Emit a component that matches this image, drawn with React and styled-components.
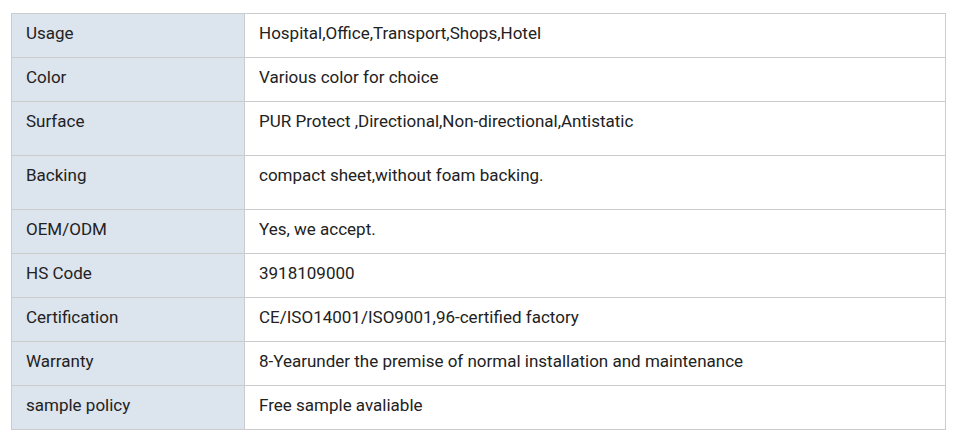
import React from "react";
import styled, { createGlobalStyle } from "styled-components";

const GlobalStyle = createGlobalStyle`
  html, body {
    margin: 0;
    padding: 0;
    background: #fff;
  }
`;

const Wrapper = styled.div`
  padding: 13px 10px 14px 11px;
`;

const Table = styled.table`
  width: 935px;
  border-collapse: collapse;
  font-family: Roboto, "Liberation Sans", sans-serif;
  font-size: 17px;
  color: #222;
`;

const Row = styled.tr`
  height: ${(p) => (p.$tall ? "54px" : "44px")};
`;

const Label = styled.td`
  width: 204px;
  background: #dce4ee;
  border: 1px solid #cccccc;
  padding: 8px 14px 12px;
  vertical-align: top;
  line-height: 23px;
`;

const Value = styled.td`
  border: 1px solid #cccccc;
  padding: 8px 14px 12px;
  vertical-align: top;
  line-height: 23px;
`;

const specs = [
  { label: "Usage", value: "Hospital,Office,Transport,Shops,Hotel" },
  { label: "Color", value: "Various color for choice" },
  { label: "Surface", value: "PUR Protect ,Directional,Non-directional,Antistatic", tall: true },
  { label: "Backing", value: "compact sheet,without foam backing.", tall: true },
  { label: "OEM/ODM", value: "Yes, we accept." },
  { label: "HS Code", value: "3918109000" },
  { label: "Certification", value: "CE/ISO14001/ISO9001,96-certified factory" },
  { label: "Warranty", value: "8-Yearunder the premise of normal installation and maintenance" },
  { label: "sample policy", value: "Free sample avaliable" },
];

const App = () => {
  return (
    <>
      <GlobalStyle />
      <Wrapper>
        <Table>
          <tbody>
            {specs.map((item) => (
              <Row key={item.label} $tall={item.tall}>
                <Label>{item.label}</Label>
                <Value>{item.value}</Value>
              </Row>
            ))}
          </tbody>
        </Table>
      </Wrapper>
    </>
  );
};

export default App;
